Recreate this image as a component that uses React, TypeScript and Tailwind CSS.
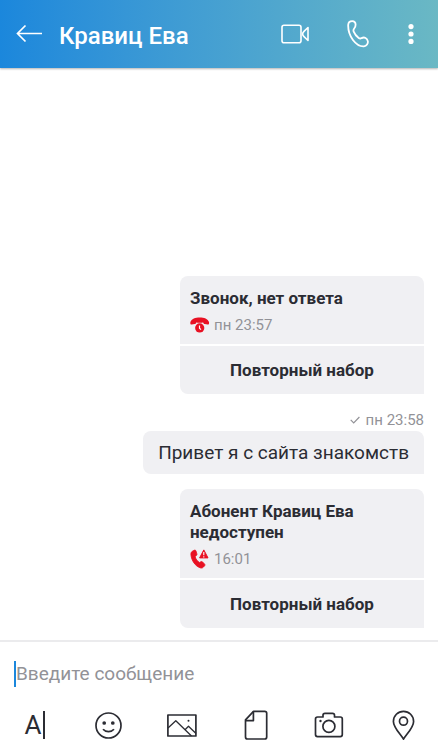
import type { ReactNode } from 'react';

type CallCardProps = {
  title: string;
  time: string;
  icon: ReactNode;
};

function MissedCallIcon() {
  return (
    <svg className="w-5 h-4" viewBox="0 0 20 16" aria-hidden="true">
      <path
        d="M0.4 5C1.500 1.900 5.300.5 9.700.5s8.200 1.400 9.300 4.500c.3 1.600-.1 2.700-1.300 2.600l-3-.5c-1-.2-1.400-.8-1.500-1.700l-.1-.6H6.300l-.1.600c-.1.900-.5 1.500-1.500 1.700l-3 .5C.5 7.700.1 6.600.4 5z"
        fill="#e81123"
      />
      <circle cx="9.700" cy="10.600" r="5.300" fill="#f0f0f3" />
      <path d="M5.500 5.200V3.500h8.400v1.700l-2.200.5h-4z" fill="#e81123" />
      <circle cx="9.700" cy="10.900" r="4.600" fill="#e81123" />
      <path d="M9.500 8.500v2.800l1.500 1.300" fill="none" stroke="#fff" strokeWidth="1.200" />
    </svg>
  );
}

function FailedCallIcon() {
  return (
    <svg className="w-5 h-5" viewBox="0 0 20 20" aria-hidden="true">
      <path
        d="M2.300 2.300 4.200 1.300c.8-.4 1.500-.1 1.800.7l.9 2.900c.2.700 0 1.200-.5 1.600L5.100 7.600c.7 2.500 2.300 4.600 4.300 5.900l1.500-.8c.6-.3 1.200-.2 1.700.3l1.900 2c.6.600.6 1.300 0 1.900l-1.300 1.400c-.8.8-1.900.9-3.100.5C5.300 17 1.500 11.800.9 5.700.8 4.200 1.300 2.900 2.300 2.300z"
        fill="#e81123"
        stroke="#e81123"
        strokeWidth="0.800"
      />
      <path d="M13.800.9 18 8.900H9.600z" fill="#e81123" stroke="#e81123" strokeLinejoin="round" />
      <path d="M13.800 3v3.300M13.800 7.200v1.200" stroke="#fff" strokeWidth="1.100" />
    </svg>
  );
}

function CallCard({ title, time, icon }: CallCardProps) {
  return (
    <article className="w-[244px] flex flex-col gap-0.5">
      <div className="bg-[#f0f0f3] rounded-t-lg px-2.5 pt-3 pb-[9px]">
        <h2 className="text-[17px] leading-[21px] font-bold">{title}</h2>
        <div className="flex items-center gap-1 mt-1.5 h-5 text-[15px] leading-5 text-[#929297]">
          {icon}
          <time>{time}</time>
        </div>
      </div>
      <button type="button" className="bg-[#f0f0f3] rounded-bl-lg h-12 text-[17px] leading-6 font-bold">
        Повторный набор
      </button>
    </article>
  );
}

function Header() {
  return (
    <header className="flex items-center h-[68px] pl-4 pr-6 text-white bg-linear-to-r from-[#1b87dc] to-[#6ab8c4] shadow-[0_1px_2px_rgba(0,0,0,0.3)]">
      <button type="button" aria-label="Назад">
        <svg className="w-[27px] h-5" viewBox="0 0 27 20" fill="none" stroke="currentColor" strokeWidth="1.700">
          <path d="M9.500 1.500 1.500 9.500l8 8M1.500 9.500H26" />
        </svg>
      </button>
      <h1 className="flex-1 ml-4 pt-1 text-[24px] leading-8 font-medium whitespace-nowrap">Кравиц Ева</h1>
      <button type="button" aria-label="Видеозвонок">
        <svg className="w-7 h-5" viewBox="0 0 28 20" fill="none" stroke="currentColor" strokeWidth="1.600" strokeLinejoin="round">
          <rect x="1" y="1.200" width="19" height="17.600" rx="2" />
          <path d="M27 3.500v13l-4-3.800c-1.800-1.700-1.800-3.700 0-5.400z" />
        </svg>
      </button>
      <button type="button" aria-label="Позвонить" className="ml-[38px]">
        <svg className="w-[22px] h-7" viewBox="0 0 22 28" fill="none" stroke="currentColor" strokeWidth="1.800" strokeLinejoin="round">
          <path d="M1.200 4.800C1.400 2.500 2.900 1.200 5.200 1.200c2 0 3.400 1.500 3.400 3.600 0 1.500-.4 2.500-1.400 3.700-.9 1.100-1 2-.5 3.200 1 2.500 2.800 4.700 5 6.300 1 .7 1.900.7 2.900.1 2.800-1.500 5.600.1 6.200 3 .5 2.600-1.200 4.900-3.900 5.200C9 26.700.8 16.100 1.200 4.800z" />
        </svg>
      </button>
      <button type="button" aria-label="Меню" className="ml-[39px]">
        <svg className="w-1.5 h-5" viewBox="0 0 6 20" fill="currentColor">
          <circle cx="3" cy="2.600" r="2.600" />
          <circle cx="3" cy="10" r="2.600" />
          <circle cx="3" cy="17.400" r="2.600" />
        </svg>
      </button>
    </header>
  );
}

const tools = [
  {
    label: 'Смайлики',
    icon: (
      <>
        <circle cx="14.500" cy="15.500" r="12.500" />
        <path d="M9 19.300c2.800 3.200 8.200 3.200 11 0" />
        <circle cx="10.200" cy="13" r="1" fill="currentColor" />
        <circle cx="18.800" cy="13" r="1" fill="currentColor" />
      </>
    ),
  },
  {
    label: 'Галерея',
    icon: (
      <>
        <rect x="0.900" y="5" width="28" height="21" />
        <path d="m1 18 7.800-7.200L24.500 26M18 19.700l3.500-3.400L29 23.500" strokeWidth="1.300" />
        <circle cx="21.500" cy="10.700" r="1" fill="currentColor" stroke="none" />
      </>
    ),
  },
  {
    label: 'Файл',
    icon: (
      <>
        <path d="M12.500 1.300h11.200a2 2 0 0 1 2 2v23.700a2 2 0 0 1-2 2H6.500a2 2 0 0 1-2-2V9.800z" />
        <path d="M12.400 1.300v9.300H4.500" />
      </>
    ),
  },
  {
    label: 'Камера',
    icon: (
      <>
        <path d="M3.500 7H9V5.300a2 2 0 0 1 2-2h7.500a2 2 0 0 1 2 2V7h5.800a2 2 0 0 1 2 2v15.600a2 2 0 0 1-2 2H3.500a2 2 0 0 1-2-2V9a2 2 0 0 1 2-2z" />
        <circle cx="14.900" cy="16.400" r="6" />
        <circle cx="6.500" cy="11" r="1.200" fill="currentColor" stroke="none" />
      </>
    ),
  },
  {
    label: 'Местоположение',
    icon: (
      <>
        <path d="M15.500 29.200C12.800 24.500 5.400 17.500 5.400 11.400a10.100 10.100 0 0 1 20.200 0c0 6.100-7.400 13.100-10.100 17.800z" />
        <circle cx="15.500" cy="11.200" r="4" />
      </>
    ),
  },
];

function Composer() {
  return (
    <footer className="border-t-2 border-[#ebebed] pt-4">
      <div className="flex items-center h-8 px-3.5">
        <span className="w-0.5 h-[26px] bg-[#1b87dc]" />
        <input
          type="text"
          aria-label="Введите сообщение"
          placeholder="Введите сообщение"
          className="flex-1 min-w-0 text-[19px] leading-8 placeholder:text-[#929297] placeholder:opacity-100 outline-none"
        />
      </div>
      <div className="flex items-center justify-between px-5 pt-5 pb-2.5">
        <button type="button" aria-label="Формат текста" className="flex items-center justify-center w-[30px] h-[30px]">
          <span className="text-[26px] leading-[30px]">A</span>
          <span className="w-0.5 h-7 ml-0.5 bg-[#2b2c33]" />
        </button>
        {tools.map((tool) => (
          <button key={tool.label} type="button" aria-label={tool.label}>
            <svg className="w-[30px] h-[30px]" viewBox="0 0 30 30" fill="none" stroke="currentColor" strokeWidth="1.700" strokeLinejoin="round">
              {tool.icon}
            </svg>
          </button>
        ))}
      </div>
    </footer>
  );
}

export default function App() {
  return (
    <div className="flex flex-col min-h-screen bg-white text-[#2b2c33] font-[Roboto,sans-serif]">
      <Header />
      <main className="flex-1 flex flex-col justify-end items-end px-3.5 pb-3">
        <CallCard title="Звонок, нет ответа" time="пн 23:57" icon={<MissedCallIcon />} />
        <div className="flex items-center gap-1.5 mt-4 mb-px text-[15px] leading-5 text-[#929297]">
          <svg className="w-2.5 h-2" viewBox="0 0 10 8" fill="none" stroke="currentColor" strokeWidth="1.200" aria-hidden="true">
            <path d="m.7 3.800 3 3L9.400 1" />
          </svg>
          <time>пн 23:58</time>
        </div>
        <p className="mb-[15px] px-[15px] py-2 bg-[#f0f0f3] rounded-lg rounded-br-none text-[19px] leading-[27px]">
          Привет я с сайта знакомств
        </p>
        <CallCard title="Абонент Кравиц Ева недоступен" time="16:01" icon={<FailedCallIcon />} />
      </main>
      <Composer />
    </div>
  );
}
